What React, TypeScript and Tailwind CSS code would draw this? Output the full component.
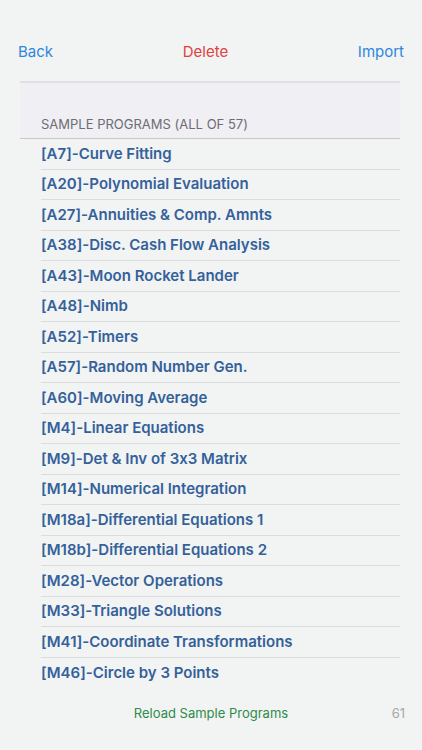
const PROGRAMS = [
  "[A7]-Curve Fitting",
  "[A20]-Polynomial Evaluation",
  "[A27]-Annuities & Comp. Amnts",
  "[A38]-Disc. Cash Flow Analysis",
  "[A43]-Moon Rocket Lander",
  "[A48]-Nimb",
  "[A52]-Timers",
  "[A57]-Random Number Gen.",
  "[A60]-Moving Average",
  "[M4]-Linear Equations",
  "[M9]-Det & Inv of 3x3 Matrix",
  "[M14]-Numerical Integration",
  "[M18a]-Differential Equations 1",
  "[M18b]-Differential Equations 2",
  "[M28]-Vector Operations",
  "[M33]-Triangle Solutions",
  "[M41]-Coordinate Transformations",
  "[M46]-Circle by 3 Points",
];

export default function App() {
  return (
    <div className="flex h-[750px] w-[422px] flex-col overflow-hidden bg-[#f2f3f3] font-[Inter,'Liberation_Sans',sans-serif] [font-feature-settings:'calt'_0]">
      <div className="flex h-[81px] items-start justify-between px-[18px] pt-[41px] text-[15px]">
        <button className="text-[#2f86de]">Back</button>
        <button className="text-[#e0413f]">Delete</button>
        <button className="text-[#2f86de]">Import</button>
      </div>

      <div className="ml-[20px] w-[380px] border-t-2 border-[#e0e0e2]">
        <div className="flex h-[56px] items-end border-b border-[#c8c7cc] bg-[#efeff4] pb-[4px] pl-[21px] text-[13px] text-[#6d6d72]">
          SAMPLE PROGRAMS (ALL OF 57)
        </div>
        <ul>
          {PROGRAMS.map((name, i) => (
            <li key={name} className="pl-[21px]">
              <div
                className={`flex h-[30.5px] items-center text-[15px] font-semibold text-[#34619a] ${
                  i < PROGRAMS.length - 1 ? "border-b border-[#dcdcde]" : ""
                }`}
              >
                {name}
              </div>
            </li>
          ))}
        </ul>
      </div>

      <div className="relative mt-[16px] flex items-center justify-center">
        <span className="text-[13px] text-[#2e8b4b]">Reload Sample Programs</span>
        <span className="absolute right-[17px] text-[13px] text-[#a8a8a8]">61</span>
      </div>
    </div>
  );
}
